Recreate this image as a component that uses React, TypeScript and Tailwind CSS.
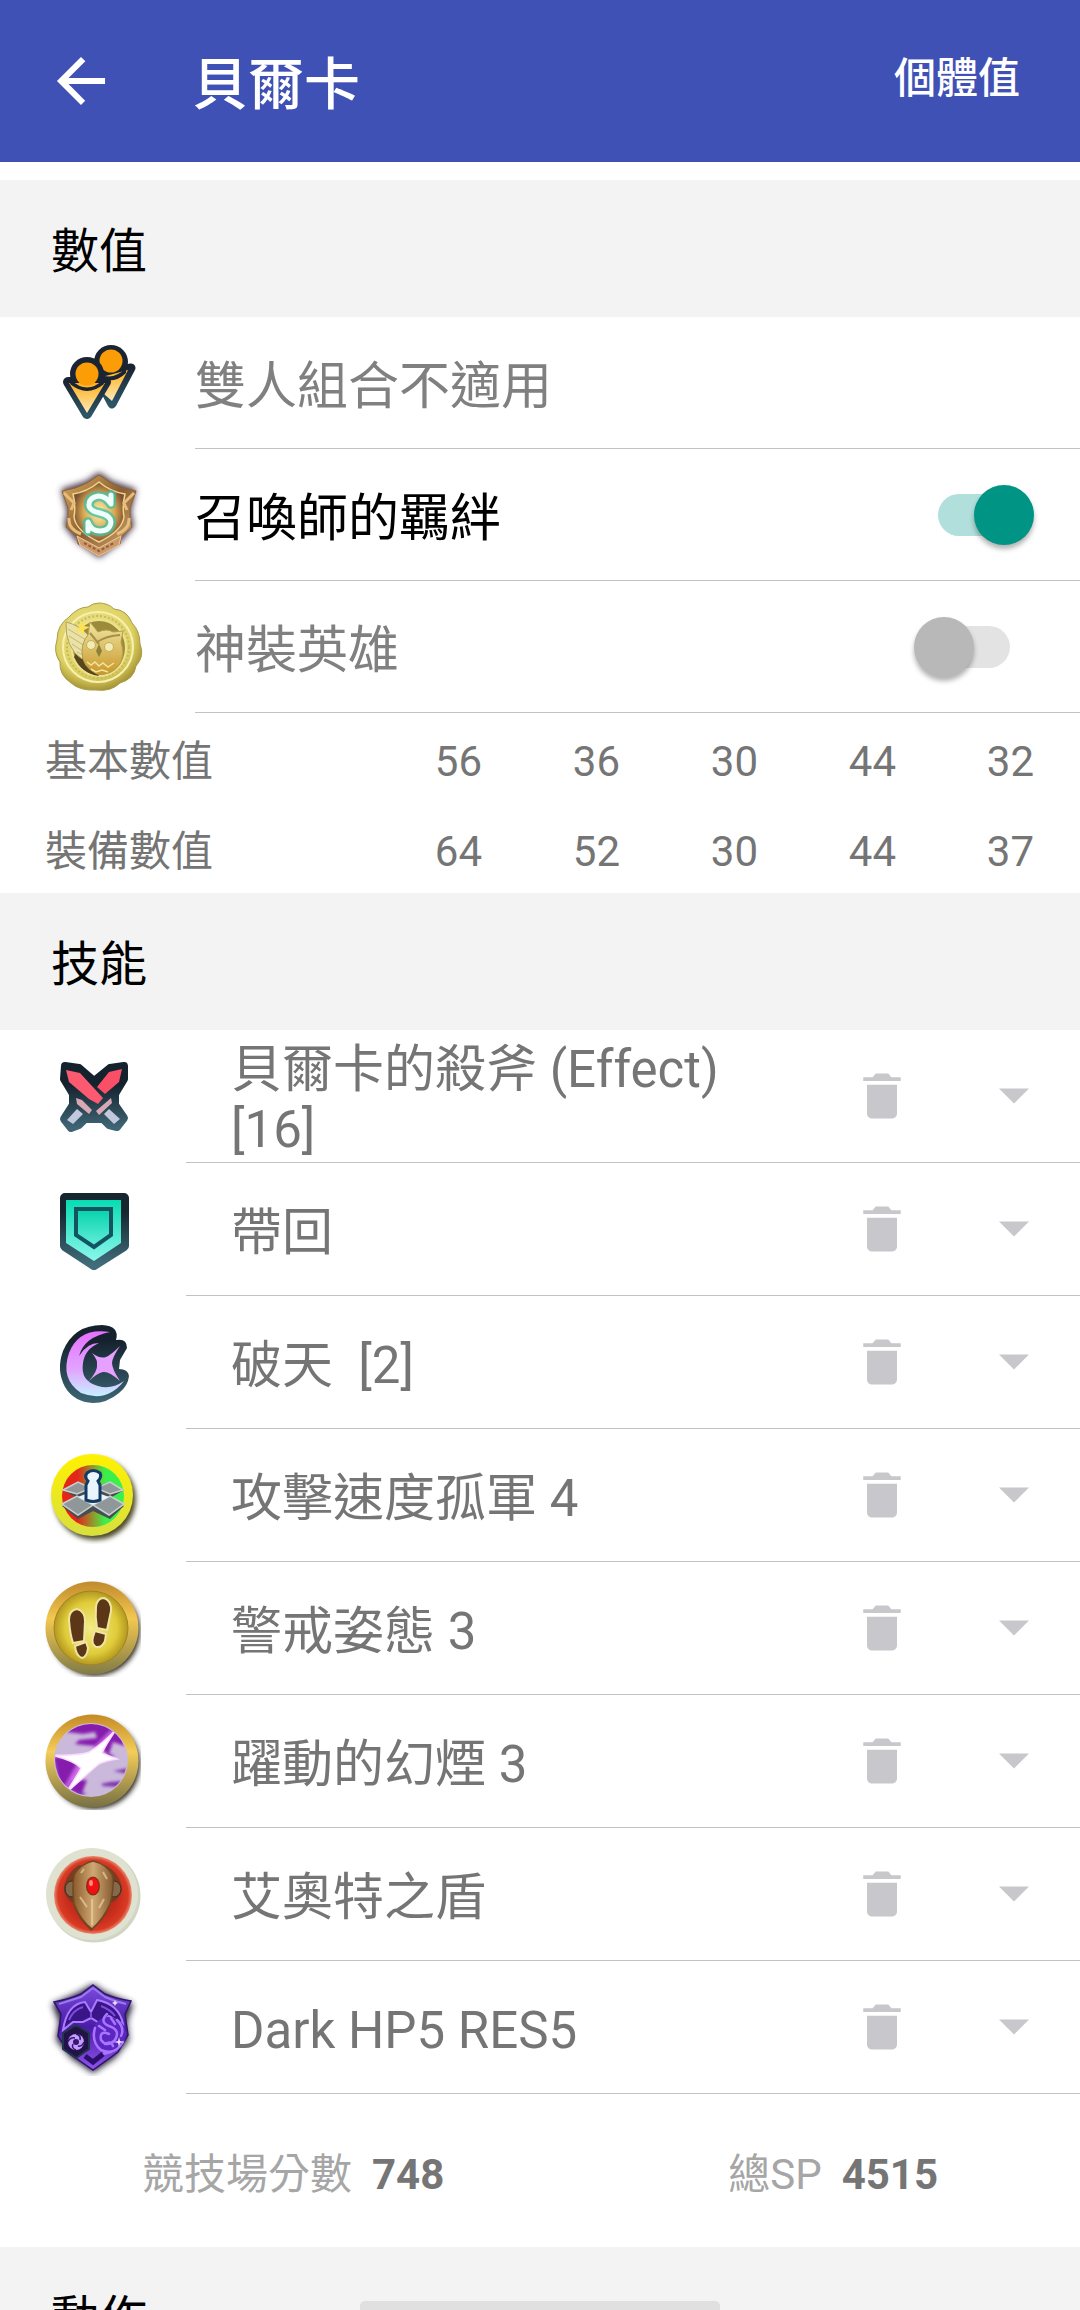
import { useState, type ReactNode } from "react";

/* ---------- interface glyphs ---------- */

function BackIcon() {
  return (
    <svg viewBox="0 0 512 512" className="size-[72px]" fill="currentColor" aria-hidden="true">
      <path d="M427 234.6H167.3L287 114.9 256 85 85 256l171 171 29.9-29.9-118.6-119.7H427z" />
    </svg>
  );
}

function TrashIcon() {
  return (
    <svg viewBox="0 0 512 512" className="size-[60px]" fill="currentColor" aria-hidden="true">
      <path d="M128 405.4c0 23.4 19.2 42.6 42.7 42.6h170.6c23.5 0 42.7-19.2 42.7-42.6V160H128zM416 96h-80l-26.8-32H202.8L176 96H96v32h320z" />
    </svg>
  );
}

function CaretIcon() {
  return (
    <svg viewBox="0 0 512 512" className="size-[60px]" fill="currentColor" aria-hidden="true">
      <path d="M128 192l128 128 128-128z" />
    </svg>
  );
}

/* ---------- option emblems (90 × 90) ---------- */

function DuoIcon() {
  return (
    <svg viewBox="0 0 90 90" className="size-[90px]" aria-hidden="true">
      <defs>
        <linearGradient id="duo-body" x1="0" y1="0" x2="0" y2="1">
          <stop offset="0" stopColor="#ffb01c" />
          <stop offset="1" stopColor="#ffe9b8" />
        </linearGradient>
        <linearGradient id="duo-edge" x1="0" y1="0" x2="0" y2="1">
          <stop offset="0" stopColor="#1b2433" />
          <stop offset="1" stopColor="#2c5566" />
        </linearGradient>
      </defs>
      <g strokeLinejoin="round">
        <path d="M42 36 77 30 58 66Z" fill="url(#duo-edge)" stroke="url(#duo-edge)" strokeWidth="9" />
        <circle cx="57" cy="24" r="17" fill="#1b2433" />
        <path d="M44 40 74 32 58 63 50 56Z" fill="url(#duo-body)" />
        <path d="M44 35Q58 44 72 30L72 35Q60 47 44 40Z" fill="#1b2433" />
        <circle cx="57" cy="23" r="11.500" fill="#fb9d06" />
        <path d="M14 44 52 44 33 76Z" fill="url(#duo-edge)" stroke="url(#duo-edge)" strokeWidth="10" />
        <circle cx="33" cy="36" r="17" fill="#1b2433" />
        <path d="M15 45 51 45 33 75Z" fill="url(#duo-body)" />
        <path d="M17 42Q33 57 49 42L50 46Q33 60 16 46Z" fill="#1b2433" />
        <circle cx="33" cy="36" r="11.500" fill="#fb9d06" />
      </g>
    </svg>
  );
}

function SummonerIcon() {
  return (
    <svg viewBox="0 0 90 90" className="size-[90px] overflow-visible" aria-hidden="true">
      <defs>
        <linearGradient id="bond-frame" x1="0" y1="0" x2="1" y2="1">
          <stop offset="0" stopColor="#d8a95c" />
          <stop offset="0.500" stopColor="#8b5f33" />
          <stop offset="1" stopColor="#e3b877" />
        </linearGradient>
        <radialGradient id="bond-core">
          <stop offset="0" stopColor="#fff3b0" />
          <stop offset="0.600" stopColor="#d9a850" />
          <stop offset="1" stopColor="#7b5232" />
        </radialGradient>
        <filter id="bond-blur" x="-20%" y="-20%" width="140%" height="140%">
          <feGaussianBlur stdDeviation="3" />
        </filter>
      </defs>
      <path d="M45 2 58 11 82 19 77 42 80 56 67 72 45 88 23 72 10 56 13 42 7 19 32 11Z" fill="#4b3b4c" filter="url(#bond-blur)" />
      <path d="M45 5 57 13Q68 19 82 21L76 38 76 50 78 57 67 67 66 74 45 86 24 74 23 67 12 57 14 50 14 38 8 21Q22 19 33 13Z" fill="url(#bond-frame)" stroke="#8c6436" />
      <path d="M45 12Q57 22 71 24 68 36 70 47 68 61 45 72 22 61 20 47 22 36 19 24 33 22 45 12Z" fill="url(#bond-core)" stroke="#f4d38d" strokeWidth="1.500" />
      <path d="M10 23 20 33 17 40M80 23 70 33 73 40M15 48Q14 59 27 64M75 48Q76 59 63 64" fill="none" stroke="#e6bd7c" strokeWidth="3" />
      <path d="M23 66 45 78 67 66 65 75 45 86 26 75Z" fill="#cd986a" stroke="#efca96" />
      <path d="M30 73 45 81 60 73" fill="none" stroke="#8d5f3a" strokeWidth="2" strokeDasharray="3 2" />
      <g fill="none" strokeLinecap="round" strokeLinejoin="round">
        <path d="M57 25 57 34Q52 26 44 26 34 28 35 36 36 41 46 43 57 46 57 52 56 61 46 61 37 61 34 52L34 61" stroke="#3fc0a8" strokeWidth="10" opacity="0.750" />
        <path d="M57 25 57 34Q52 26 44 26 34 28 35 36 36 41 46 43 57 46 57 52 56 61 46 61 37 61 34 52L34 61" stroke="#effffb" strokeWidth="5" />
      </g>
    </svg>
  );
}

function OwlSealIcon() {
  return (
    <svg viewBox="0 0 90 90" className="size-[90px]" aria-hidden="true">
      <defs>
        <radialGradient id="seal-wax" cx="0.450" cy="0.400" r="0.600">
          <stop offset="0" stopColor="#f3eb9a" />
          <stop offset="0.750" stopColor="#ddd063" />
          <stop offset="1" stopColor="#a79636" />
        </radialGradient>
        <linearGradient id="seal-owl" x1="0" y1="0" x2="0" y2="1">
          <stop offset="0" stopColor="#f1e6a2" />
          <stop offset="1" stopColor="#c9982b" />
        </linearGradient>
      </defs>
      <path d="M45 1Q54 1 60 7 73 8 78 21 86 29 86 42 91 54 82 64 80 77 66 81 57 90 42 88 26 89 17 81 5 73 6 60-1 50 3 38 3 23 15 15 24 5 34 5 39 1 45 1Z" fill="url(#seal-wax)" stroke="#a99d45" />
      <circle cx="44" cy="45" r="35" fill="none" stroke="#f7f1ac" strokeWidth="2" />
      <circle cx="44" cy="45" r="31" fill="none" stroke="#c7ba5b" strokeWidth="2" strokeDasharray="2 2" />
      <ellipse cx="45" cy="46" rx="27" ry="28" fill="#9c8b3a" stroke="#eee38d" strokeWidth="2" />
      <path d="M20 55Q28 72 45 74L35 60 28 40Z" fill="#57461c" />
      <path d="M12 20Q11 46 28 57L35 34Q25 23 12 20Z" fill="#e9e1a5" stroke="#b3a561" />
      <path d="M14 27 32 38M15 34 31 44M18 42 30 50M23 50 31 54" stroke="#c4b878" fill="none" />
      <path d="M36 20 44 30Q53 26 59 30L69 29 67 40Q71 52 66 62 58 74 43 72 28 65 28 50 28 40 34 33Z" fill="url(#seal-owl)" stroke="#b39d48" />
      <path d="M36 31Q41 37 45 42L43 40Q52 34 66 33" fill="none" stroke="#a1914a" strokeWidth="2" />
      <path d="M45 42 42 49 45 55 48 49Z" fill="#8b8138" />
      <circle cx="37" cy="43" r="4.500" fill="#f3eab4" stroke="#c1b05b" />
      <circle cx="55" cy="45" r="4.500" fill="#f3eab4" stroke="#c1b05b" />
      <path d="M33 60 37 63 41 60 45 64 49 61 54 65 60 61M37 67 42 70 48 68 54 70" fill="none" stroke="#f2e49a" strokeWidth="1.500" />
      <path d="M27 18 29 24 36 25 30 28 30 35 27 29 20 30 25 26Z" fill="#ffe24f" />
    </svg>
  );
}

/* ---------- skill emblems (96 × 96) ---------- */

function SkillSvg({ children }: { children: ReactNode }) {
  return (
    <svg viewBox="0 0 96 96" className="size-[96px]" aria-hidden="true">
      {children}
    </svg>
  );
}

function WeaponIcon() {
  return (
    <SkillSvg>
      <defs>
        <linearGradient id="weapon-edge" x1="0" y1="0" x2="0" y2="1">
          <stop offset="0.300" stopColor="#14222e" />
          <stop offset="1" stopColor="#3f6675" />
        </linearGradient>
      </defs>
      <path d="M20 17 34 19 49 32 65 19 79 17 79 30 70 45 70 56 79 69 72 78 64 76 58 70 40 70 34 76 26 79 19 70 28 56 28 45 19 30Z" fill="url(#weapon-edge)" stroke="url(#weapon-edge)" strokeWidth="8" strokeLinejoin="round" />
      <path d="M77 20 64 23 52 38 60 45 74 33Z" fill="#fb4f68" />
      <path d="M21 21 35 24 58 49 53 55 44 50 24 33Z" fill="#fb5a70" />
      <path d="M31 49 37 51 47 61 44 65 32 55ZM66 49 51 62 54 66 67 54Z" fill="#d9a8b4" />
      <path d="M32 60 38 65 28 75 22 71ZM64 60 59 65 69 75 75 70Z" fill="#c3c9dc" />
    </SkillSvg>
  );
}

function AssistIcon() {
  return (
    <SkillSvg>
      <defs>
        <linearGradient id="assist-fill" x1="0" y1="0" x2="0" y2="1">
          <stop offset="0" stopColor="#08dcb2" />
          <stop offset="1" stopColor="#8bf6ec" />
        </linearGradient>
        <linearGradient id="assist-inner" x1="0" y1="0" x2="0" y2="1">
          <stop offset="0" stopColor="#04d3ab" />
          <stop offset="1" stopColor="#67eedc" />
        </linearGradient>
        <linearGradient id="assist-edge" x1="0" y1="0" x2="0" y2="1">
          <stop offset="0.200" stopColor="#15262f" />
          <stop offset="1" stopColor="#416d7b" />
        </linearGradient>
      </defs>
      <path d="M20 16H79V64L49 83 20 64Z" fill="url(#assist-edge)" stroke="url(#assist-edge)" strokeWidth="10" strokeLinejoin="round" />
      <path d="M21 18H76V61L49 79 21 61Z" fill="url(#assist-fill)" />
      <path d="M31 27H66V53L49 65 31 53Z" fill="url(#assist-inner)" stroke="#145460" strokeWidth="4" />
    </SkillSvg>
  );
}

function SpecialIcon() {
  return (
    <SkillSvg>
      <defs>
        <linearGradient id="special-fill" x1="0" y1="0" x2="0" y2="1">
          <stop offset="0" stopColor="#e66fff" />
          <stop offset="0.600" stopColor="#e2a5ff" />
          <stop offset="1" stopColor="#c5f0ff" />
        </linearGradient>
        <linearGradient id="special-edge" x1="0" y1="0" x2="0" y2="1">
          <stop offset="0.200" stopColor="#15222e" />
          <stop offset="1" stopColor="#3d6675" />
        </linearGradient>
      </defs>
      <path d="M57 10Q75 11 71 25 82 23 82 33L75 45 74 54Q83 54 84 61 83 71 74 78 62 88 48 88 29 87 20 72 11 55 18 36 29 10 57 10Z" fill="url(#special-edge)" />
      <path d="M65 17Q34 12 24 38 15 64 36 78 62 88 79 66 66 75 53 71 35 66 38 48 40 34 54 28 42 28 34 41 39 22 65 17Z" fill="url(#special-fill)" />
      <path d="M75 31Q67 43 67 48 67 54 75 66 64 56 58 57 52 58 43 67 53 56 52 50 53 45 47 38 55 44 61 42 66 40 75 31Z" fill="#e7a0ff" />
    </SkillSvg>
  );
}

function SoloIcon() {
  return (
    <SkillSvg>
      <defs>
        <linearGradient id="solo-field">
          <stop offset="0.250" stopColor="#e32619" />
          <stop offset="0.550" stopColor="#7fae33" />
          <stop offset="0.700" stopColor="#3cf04b" />
        </linearGradient>
        <linearGradient id="solo-rim" x1="0" y1="0" x2="0" y2="1">
          <stop offset="0" stopColor="#fff200" />
          <stop offset="1" stopColor="#d8df3f" />
        </linearGradient>
        <filter id="coin-shade" x="-20%" y="-20%" width="140%" height="140%">
          <feGaussianBlur stdDeviation="2.500" />
        </filter>
      </defs>
      <circle cx="50" cy="51" r="41" fill="#4c4828" filter="url(#coin-shade)" />
      <circle cx="47" cy="47" r="41" fill="url(#solo-rim)" />
      <circle cx="48" cy="48" r="31" fill="url(#solo-field)" />
      <path d="M18 42 32 34 48 40 64 34 79 42 67 49 79 58 65 71 48 63 33 71 17 58 30 49Z" fill="#474d50" />
      <g fill="#8f9799" stroke="#c9cfd0" strokeWidth="1.500">
        <path d="M18 42 33 34 46 40 32 46ZM78 42 65 34 51 40 65 46ZM17 56 32 48 48 57 33 67ZM79 56 65 48 48 57 64 67Z" />
      </g>
      <path d="M33 49 48 43 64 49 48 57Z" fill="#e8f5f9" />
      <path d="M41 52V37L43 33Q39 29 42 25 48 20 55 25 57 29 53 33L55 37V52Q48 55 41 52Z" fill="#e9f6ff" stroke="#123b66" strokeWidth="3" />
    </SkillSvg>
  );
}

function FeetIcon() {
  return (
    <SkillSvg>
      <defs>
        <linearGradient id="feet-rim" x1="0" y1="0" x2="0" y2="1">
          <stop offset="0" stopColor="#c08a2e" />
          <stop offset="0.400" stopColor="#f3c850" />
          <stop offset="1" stopColor="#807b46" />
        </linearGradient>
        <radialGradient id="feet-field">
          <stop offset="0" stopColor="#f3ec87" />
          <stop offset="0.700" stopColor="#e0cc3a" />
          <stop offset="1" stopColor="#b3981f" />
        </radialGradient>
      </defs>
      <circle cx="50" cy="50" r="45" fill="#2d281d" filter="url(#coin-shade)" />
      <circle cx="47" cy="47" r="46.500" fill="url(#feet-rim)" />
      <circle cx="46" cy="47" r="37" fill="url(#feet-field)" stroke="#a38321" />
      <g fill="#5b3718" stroke="#f0e4a2" strokeWidth="2">
        <path d="M24 39Q24 29 32 28 40 30 40 40L39 60 28 62Q25 53 24 39ZM30 65 41 61 43 67Q42 76 37 77 31 75 30 65Z" />
        <path d="M51 26Q52 17 59 17 67 20 66 30L62 49 52 47Q50 36 51 26ZM50 50 61 53 60 60Q57 67 51 66 46 63 48 56Z" />
      </g>
    </SkillSvg>
  );
}

function SmokeIcon() {
  return (
    <SkillSvg>
      <defs>
        <linearGradient id="smoke-rim" x1="0" y1="0" x2="0" y2="1">
          <stop offset="0" stopColor="#c58a25" />
          <stop offset="0.400" stopColor="#f3cd59" />
          <stop offset="1" stopColor="#777044" />
        </linearGradient>
        <clipPath id="smoke-clip">
          <circle cx="46" cy="46" r="36" />
        </clipPath>
        <filter id="smoke-soft">
          <feGaussianBlur stdDeviation="1.500" />
        </filter>
      </defs>
      <circle cx="50" cy="50" r="45" fill="#2b251d" filter="url(#coin-shade)" />
      <circle cx="47" cy="47" r="46.500" fill="url(#smoke-rim)" />
      <circle cx="46" cy="46" r="37" fill="#cbb9dc" />
      <g clipPath="url(#smoke-clip)">
        <g filter="url(#smoke-soft)">
          <path d="M22 6H80V32L68 28 64 40 50 32 30 30 34 26 52 24 50 18 38 20 22 18ZM8 42 34 46 32 58 26 66 42 66 36 82 14 70Z" fill="#861fae" />
          <path d="M56 70Q70 66 84 68L74 73 58 72ZM68 57 84 54 84 60ZM60 38 70 42 64 44ZM30 78 42 79 34 83Z" fill="#7d32ae" />
          <path d="M74 8 56 38 34 62 12 86 32 50Z" fill="#d66cf0" opacity="0.800" />
        </g>
        <path d="M72 14Q60 32 57 39 64 42 72 45 60 47 54 50 42 60 20 80 32 62 36 54 28 46 6 41 34 42 44 38 58 30 72 14Z" fill="#fff" stroke="#f9dcff" strokeWidth="1.500" />
      </g>
    </SkillSvg>
  );
}

function AegisIcon() {
  return (
    <SkillSvg>
      <defs>
        <radialGradient id="aegis-field">
          <stop offset="0.600" stopColor="#c22a1a" />
          <stop offset="0.900" stopColor="#d93a24" />
          <stop offset="1" stopColor="#e88a70" />
        </radialGradient>
        <linearGradient id="aegis-shield">
          <stop offset="0" stopColor="#8a5a2a" />
          <stop offset="0.500" stopColor="#cfa873" />
          <stop offset="1" stopColor="#855a30" />
        </linearGradient>
      </defs>
      <circle cx="49" cy="49" r="46.500" fill="#cfd6c4" />
      <circle cx="47" cy="47" r="46" fill="#dfe2d0" />
      <circle cx="48" cy="48" r="39" fill="url(#aegis-field)" />
      <path d="M34 18Q19 28 19 43 20 51 28 56 32 71 46 84 60 73 66 56 75 52 77 43 76 28 62 19Z" fill="#5d3f23" opacity="0.700" />
      <ellipse cx="27" cy="42" rx="7" ry="8" fill="#86694a" stroke="#3e2c1b" />
      <ellipse cx="69" cy="42" rx="7" ry="8" fill="#86694a" stroke="#3e2c1b" />
      <path d="M48 14Q62 17 68 29 69 43 65 57 59 71 47 82 36 74 29 57 27 42 29 28 35 17 48 14Z" fill="url(#aegis-shield)" stroke="#6f4a24" strokeWidth="1.500" />
      <path d="M47 52V78M36 26 39 22M58 25 62 32M35 50 42 60M59 52 54 61" stroke="#edcf9f" strokeWidth="2" fill="none" opacity="0.700" />
      <ellipse cx="48" cy="39" rx="7" ry="9.500" fill="#8f2b17" />
      <ellipse cx="48" cy="39" rx="5.500" ry="8" fill="#f01212" />
      <ellipse cx="46" cy="36" rx="2" ry="3" fill="#ff8a78" />
    </SkillSvg>
  );
}

function DarkSealIcon() {
  return (
    <SkillSvg>
      <defs>
        <linearGradient id="dark-body" x1="0" y1="0" x2="0" y2="1">
          <stop offset="0" stopColor="#7a4ce0" />
          <stop offset="0.500" stopColor="#4a1ba4" />
          <stop offset="1" stopColor="#9153f0" />
        </linearGradient>
        <filter id="dark-blur" x="-20%" y="-20%" width="140%" height="140%">
          <feGaussianBlur stdDeviation="3" />
        </filter>
      </defs>
      <path d="M48 4 60 12 88 24 82 42 84 60 70 78 48 93 26 78 11 60 14 42 7 24 34 12Z" fill="#28213a" filter="url(#dark-blur)" />
      <path d="M48 5 60 14Q72 19 86 21L80 34 83 55 73 72 48 90 25 74 13 56 16 34 9 22Q25 19 36 14Z" fill="url(#dark-body)" stroke="#301568" strokeWidth="1.500" />
      <path d="M48 8 60 17Q71 22 81 24M48 8 36 17 14 24" fill="none" stroke="#9a78ed" strokeWidth="2" />
      <path d="M18 50Q22 24 40 22L46 32 52 20Q74 24 78 44L64 36 56 44 46 38 38 42 28 42Z" fill="#3a1588" stroke="#aa7bff" strokeWidth="2" />
      <path d="M24 40Q28 30 38 27M56 26Q66 30 70 36M46 32V38" fill="none" stroke="#7d4be0" strokeWidth="2" />
      <circle cx="64" cy="54" r="17" fill="#5a26c0" />
      <path d="M62 34Q54 42 64 46 76 50 70 60 62 68 56 60 54 50 64 54M50 48Q46 62 56 70 70 76 78 62M72 40Q80 48 76 56M60 64Q66 60 68 66M54 46 60 50M66 38 70 44M58 74 66 72" fill="none" stroke="#a873ff" strokeWidth="2.500" strokeLinecap="round" />
      <path d="M31 45 44 53V69L31 78 18 69V53Z" fill="#211347" stroke="#24354f" strokeWidth="2" />
      <circle cx="31" cy="62" r="8" fill="#c79bff" />
      <circle cx="31" cy="62" r="3" fill="#35196c" />
      <path d="M31 54Q36 55 35 60M39 62Q37 67 33 66M31 70Q26 68 28 64M23 62Q25 57 30 58" fill="none" stroke="#35196c" strokeWidth="1.500" />
      <path d="M40 76 48 82 58 74" fill="none" stroke="#2c0f6c" strokeWidth="5" />
      <path d="M74 57 75 61 79 62 75 63 74 67 73 63 69 62 73 61ZM70 20 71 22 73 23 71 24 70 26 69 24 67 23 69 22Z" fill="#efdcff" />
    </SkillSvg>
  );
}

/* ---------- building blocks ---------- */

function SectionHeading({ children }: { children: ReactNode }) {
  return (
    <h2 className="shrink-0 bg-[#f3f3f3] pt-[39px] pb-[33px] pl-[51px] text-[48px] leading-[65px] text-black">
      {children}
    </h2>
  );
}

type Option = {
  id: string;
  label: string;
  icon: ReactNode;
  toggle?: boolean;
};

const options: Option[] = [
  { id: "duo", label: "雙人組合不適用", icon: <DuoIcon /> },
  { id: "bond", label: "召喚師的羈絆", icon: <SummonerIcon />, toggle: true },
  { id: "resplendent", label: "神裝英雄", icon: <OwlSealIcon />, toggle: false },
];

function OptionRow({ option }: { option: Option }) {
  const [on, setOn] = useState(option.toggle ?? false);
  const hasToggle = option.toggle !== undefined;
  return (
    <li className="flex pl-[54px]">
      <span className="flex w-[141px] shrink-0 items-center">{option.icon}</span>
      <div className="flex min-h-[132px] flex-1 items-center justify-between border-b border-[#c2c1c6] pr-[46px]">
        {hasToggle ? (
          <>
            <label
              htmlFor={option.id}
              className={
                on ? "pt-2 text-[51px] leading-[60px] text-black" : "pt-2 text-[51px] leading-[60px] text-[#808080]"
              }
            >
              {option.label}
            </label>
            <input
              id={option.id}
              type="checkbox"
              role="switch"
              checked={on}
              onChange={(e) => setOn(e.target.checked)}
              className="flex h-[60px] w-[120px] appearance-none items-center justify-center before:h-[42px] before:w-[72px] before:rounded-full before:bg-[#e3e3e3] after:absolute after:size-[60px] after:-translate-x-[30px] after:rounded-full after:bg-[#b8b8b8] after:shadow-[0_4px_5px_rgba(0,0,0,0.3)] checked:before:bg-[#b1dfdb] checked:after:translate-x-[30px] checked:after:bg-[#009485]"
            />
          </>
        ) : (
          <span className="pt-2 text-[51px] leading-[60px] text-[#808080]">{option.label}</span>
        )}
      </div>
    </li>
  );
}

const stats = [
  { label: "基本數值", values: [56, 36, 30, 44, 32] },
  { label: "裝備數值", values: [64, 52, 30, 44, 37] },
];

const skills = [
  { name: "貝爾卡的殺斧 (Effect) [16]", icon: <WeaponIcon /> },
  { name: "帶回", icon: <AssistIcon /> },
  { name: "破天  [2]", icon: <SpecialIcon /> },
  { name: "攻擊速度孤軍 4", icon: <SoloIcon /> },
  { name: "警戒姿態 3", icon: <FeetIcon /> },
  { name: "躍動的幻煙 3", icon: <SmokeIcon /> },
  { name: "艾奧特之盾", icon: <AegisIcon /> },
  { name: "Dark HP5 RES5", icon: <DarkSealIcon /> },
];

function SkillRow({ name, icon }: { name: string; icon: ReactNode }) {
  return (
    <li className="flex pl-[45px]">
      <span className="flex w-[141px] shrink-0 items-center">{icon}</span>
      <div className="flex min-h-[133px] flex-1 items-center border-b border-[#c2c1c6] pr-[36px] pl-[45px]">
        <span className="flex-1 pt-2 text-[51px] leading-[60px] whitespace-pre-wrap text-[#757575]">{name}</span>
        <button type="button" aria-label={`刪除 ${name}`} className="ml-[72px] text-[#c8c7cc]">
          <TrashIcon />
        </button>
        <button type="button" aria-label={`選擇 ${name}`} className="ml-[72px] text-[#c8c7cc]">
          <CaretIcon />
        </button>
      </div>
    </li>
  );
}

/* ---------- screen ---------- */

export default function App() {
  return (
    <div className="relative flex h-screen flex-col overflow-hidden bg-white font-['Roboto','Noto_Sans_CJK_TC',sans-serif]">
      <header className="flex h-[162px] shrink-0 items-center bg-[#3f51b5] pr-[60px] pl-[45px] text-white">
        <button type="button" aria-label="返回">
          <BackIcon />
        </button>
        <h1 className="flex-1 pt-2 pl-[75px] text-[56px] leading-[68px] font-medium">貝爾卡</h1>
        <button type="button" className="pb-1 text-[42px] leading-[50px] font-medium">
          個體值
        </button>
      </header>

      <main className="flex flex-1 flex-col overflow-hidden pt-[18px]">
        <SectionHeading>數值</SectionHeading>
        <ul className="shrink-0">
          {options.map((option) => (
            <OptionRow key={option.id} option={option} />
          ))}
        </ul>

        <table className="w-full shrink-0 table-fixed text-[42px] leading-[50px] text-[#757575]">
          <colgroup>
            <col />
            {stats[0].values.map((_, i) => (
              <col key={i} className="w-[138px]" />
            ))}
            <col className="w-[46px]" />
          </colgroup>
          <tbody>
            {stats.map((row) => (
              <tr key={row.label} className="h-[90px]">
                <th scope="row" className="pt-2 pl-[45px] text-left font-normal">
                  {row.label}
                </th>
                {row.values.map((value, i) => (
                  <td key={i} className="pt-2 text-right">
                    {value}
                  </td>
                ))}
                <td />
              </tr>
            ))}
          </tbody>
        </table>

        <SectionHeading>技能</SectionHeading>
        <ul className="shrink-0">
          {skills.map((skill) => (
            <SkillRow key={skill.name} name={skill.name} icon={skill.icon} />
          ))}
        </ul>

        <dl className="flex h-[153px] shrink-0 items-center justify-around pt-2 text-[42px] leading-[50px]">
          <div className="flex gap-5">
            <dt className="text-[#a6a6a6]">競技場分數</dt>
            <dd className="font-bold text-[#757575]">748</dd>
          </div>
          <div className="flex gap-5">
            <dt className="text-[#a6a6a6]">總SP</dt>
            <dd className="font-bold text-[#757575]">4515</dd>
          </div>
        </dl>

        <SectionHeading>動作</SectionHeading>
      </main>

      <div className="absolute bottom-0 left-1/2 h-[9px] w-1/3 -translate-x-1/2 rounded-t-[5px] bg-[#e0e0e0]" />
    </div>
  );
}
